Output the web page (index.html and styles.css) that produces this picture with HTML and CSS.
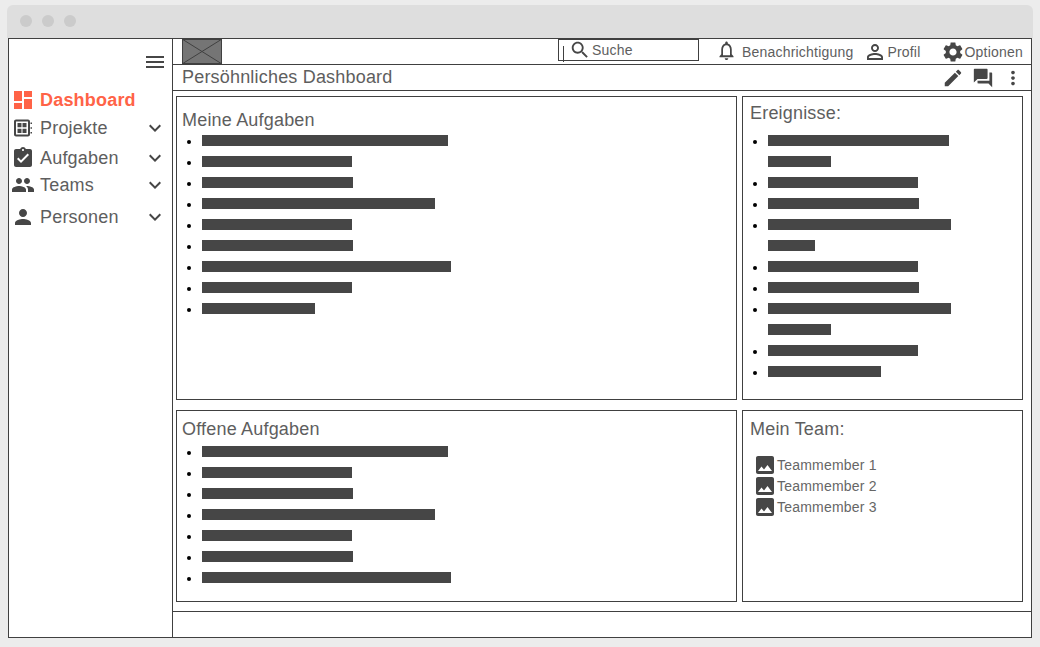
FILE: index.html
```html
<!DOCTYPE html>
<html lang="de">
<head>
<meta charset="utf-8">
<title>Dashboard</title>
<link rel="stylesheet" href="styles.css">
</head>
<body>
<div class="chrome"><i class="dot"></i><i class="dot"></i><i class="dot"></i></div>
<div class="window">
  <aside class="sidebar">
    <div class="menu-row"><svg class="ic" viewBox="0 0 24 24"><path d="M3 18h18v-2H3v2zm0-5h18v-2H3v2zm0-7v2h18V6H3z"/></svg></div>
    <nav class="nav">
      <a class="nav-item active h28"><svg class="ic" viewBox="0 0 24 24"><path d="M3 13h8V3H3v10zm0 8h8v-6H3v6zm10 0h8V11h-8v10zm0-18v6h8V3h-8z"/></svg><span class="label">Dashboard</span></a>
      <a class="nav-item h28"><svg class="ic" viewBox="0 0 24 24"><path fill-rule="evenodd" d="M5 3.500h12c1.100 0 2 .9 2 2v13c0 1.100-.9 2-2 2H5c-1.100 0-2-.9-2-2v-13c0-1.100.9-2 2-2zm0 2v13h12v-13H5zM6.500 7h4v4.300h-4V7zm5 0h4v4.300h-4V7zm-5 5.700h4V17h-4v-4.300zm5 0h4V17h-4v-4.300zM19.500 6.500H21V8h-1.500V6.500zm0 4.700H21v1.500h-1.500v-1.500zm0 4.800H21v1.500h-1.500V16z"/></svg><span class="label">Projekte</span><svg class="ic chev" viewBox="0 0 24 24"><path d="M7.410 8.590L12 13.170l4.590-4.580L18 10l-6 6-6-6 1.410-1.410z"/></svg></a>
      <a class="nav-item h32"><svg class="ic" viewBox="0 0 24 24"><path d="M19 3h-4.180C14.400 1.840 13.300 1 12 1c-1.300 0-2.400.84-2.820 2H5c-1.100 0-2 .9-2 2v14c0 1.100.9 2 2 2h14c1.100 0 2-.9 2-2V5c0-1.100-.9-2-2-2zm-7 0c.55 0 1 .45 1 1s-.45 1-1 1-1-.45-1-1 .45-1 1-1zm-2 14l-4-4 1.410-1.410L10 14.170l6.590-6.590L18 9l-8 8z"/></svg><span class="label">Aufgaben</span><svg class="ic chev" viewBox="0 0 24 24"><path d="M7.410 8.590L12 13.170l4.590-4.580L18 10l-6 6-6-6 1.410-1.410z"/></svg></a>
      <a class="nav-item h22"><svg class="ic" viewBox="0 0 24 24"><path d="M16 11c1.660 0 2.990-1.340 2.990-3S17.660 5 16 5c-1.660 0-3 1.340-3 3s1.340 3 3 3zm-8 0c1.660 0 2.990-1.340 2.990-3S9.660 5 8 5C6.340 5 5 6.340 5 8s1.340 3 3 3zm0 2c-2.330 0-7 1.170-7 3.500V19h14v-2.500c0-2.330-4.670-3.500-7-3.500zm8 0c-.29 0-.62.02-.97.05 1.160.84 1.970 1.970 1.970 3.450V19h6v-2.500c0-2.330-4.670-3.500-7-3.500z"/></svg><span class="label">Teams</span><svg class="ic chev" viewBox="0 0 24 24"><path d="M7.410 8.590L12 13.170l4.590-4.580L18 10l-6 6-6-6 1.410-1.410z"/></svg></a>
      <a class="nav-item h42"><svg class="ic" viewBox="0 0 24 24"><path d="M12 12c2.210 0 4-1.790 4-4s-1.790-4-4-4-4 1.790-4 4 1.790 4 4 4zm0 2c-2.670 0-8 1.340-8 4v2h16v-2c0-2.660-5.330-4-8-4z"/></svg><span class="label">Personen</span><svg class="ic chev" viewBox="0 0 24 24"><path d="M7.410 8.590L12 13.170l4.590-4.580L18 10l-6 6-6-6 1.410-1.410z"/></svg></a>
    </nav>
  </aside>
  <main class="main">
    <header class="topbar">
      <svg class="logo" viewBox="0 0 40 25" preserveAspectRatio="none"><rect x="0.500" y="0.500" width="39" height="24" fill="#757575" stroke="#404040"/><path d="M0 0L40 25M40 0L0 25" stroke="#404040" fill="none"/></svg>
      <div class="search">
        <i class="caret"></i>
        <svg class="ic" viewBox="0 0 24 24"><path d="M15.500 14h-.79l-.28-.27C15.410 12.590 16 11.110 16 9.500 16 5.910 13.090 3 9.500 3S3 5.910 3 9.500 5.910 16 9.500 16c1.610 0 3.090-.59 4.230-1.570l.27.28v.79l5 4.990L20.490 19l-4.990-5zm-6 0C7.010 14 5 11.990 5 9.500S7.010 5 9.500 5 14 7.010 14 9.500 11.990 14 9.500 14z"/></svg>
        <span>Suche</span>
      </div>
      <a class="tool tool-bell"><svg class="ic" viewBox="0 0 24 24" preserveAspectRatio="none"><path d="M12 22c1.100 0 2-.9 2-2h-4c0 1.100.9 2 2 2zm6-6v-5c0-3.070-1.630-5.640-4.500-6.320V4c0-.83-.67-1.500-1.500-1.500s-1.500.67-1.500 1.500v.68C7.640 5.360 6 7.920 6 11v5l-2 2v1h16v-1l-2-2zm-2 1H8v-6c0-2.480 1.510-4.500 4-4.500s4 2.020 4 4.500v6z"/></svg><span class="tool-label">Benachrichtigung</span></a>
      <a class="tool tool-profile"><svg class="ic" viewBox="0 0 24 24"><path d="M12 5.900c1.160 0 2.100.94 2.100 2.100s-.94 2.100-2.100 2.100S9.900 9.160 9.900 8s.94-2.100 2.100-2.100m0 9c2.970 0 6.100 1.460 6.100 2.100v1.100H5.900V17c0-.64 3.130-2.100 6.100-2.100M12 4C9.790 4 8 5.790 8 8s1.790 4 4 4 4-1.790 4-4-1.790-4-4-4zm0 9c-2.670 0-8 1.340-8 4v3h16v-3c0-2.660-5.330-4-8-4z"/></svg><span>Profil</span></a>
      <a class="tool tool-options"><svg class="ic" viewBox="0 0 24 24"><path d="M19.140 12.940c.04-.3.06-.61.06-.94 0-.32-.02-.64-.07-.94l2.030-1.580c.18-.14.23-.41.12-.61l-1.920-3.320c-.12-.22-.37-.29-.59-.22l-2.390.96c-.5-.38-1.030-.7-1.620-.94l-.36-2.540c-.04-.24-.24-.41-.48-.41h-3.840c-.24 0-.43.17-.47.41l-.36 2.540c-.59.24-1.130.57-1.620.94l-2.390-.96c-.22-.08-.47 0-.59.22L2.740 8.870c-.12.21-.08.47.12.61l2.030 1.580c-.05.3-.09.63-.09.94s.02.64.07.94l-2.030 1.580c-.18.14-.23.41-.12.61l1.920 3.320c.12.22.37.29.59.22l2.390-.96c.5.38 1.030.7 1.620.94l.36 2.540c.05.24.24.41.48.41h3.840c.24 0 .44-.17.47-.41l.36-2.540c.59-.24 1.130-.56 1.620-.94l2.390.96c.22.08.47 0 .59-.22l1.920-3.320c.12-.22.07-.47-.12-.61l-2.010-1.580zM12 15.600c-1.980 0-3.600-1.620-3.600-3.600s1.620-3.600 3.600-3.600 3.600 1.620 3.600 3.600-1.620 3.600-3.600 3.600z"/></svg><span>Optionen</span></a>
    </header>
    <div class="titlebar">
      <h1 class="title">Persöhnliches Dashboard</h1>
      <div class="actions">
        <svg class="ic" viewBox="0 0 24 24"><path d="M3 17.250V21h3.750L17.810 9.940l-3.750-3.750L3 17.250zM20.710 7.040c.39-.39.39-1.020 0-1.410l-2.340-2.340c-.39-.39-1.020-.39-1.410 0l-1.830 1.830 3.750 3.750 1.830-1.830z"/></svg>
        <svg class="ic" viewBox="0 0 24 24"><path d="M21 6h-2v9H6v2c0 .55.45 1 1 1h11l4 4V7c0-.55-.45-1-1-1zm-4 6V3c0-.55-.45-1-1-1H3c-.55 0-1 .45-1 1v14l4-4h10c.55 0 1-.45 1-1z"/></svg>
        <svg class="ic" viewBox="0 0 24 24"><path d="M12 8c1.100 0 2-.9 2-2s-.9-2-2-2-2 .9-2 2 .9 2 2 2zm0 2c-1.100 0-2 .9-2 2s.9 2 2 2 2-.9 2-2-.9-2-2-2zm0 6c-1.100 0-2 .9-2 2s.9 2 2 2 2-.9 2-2-.9-2-2-2z"/></svg>
      </div>
    </div>
    <div class="content">
      <section class="panel">
        <h2 class="heading head-tasks">Meine Aufgaben</h2>
        <ul class="bars">
          <li><span class="bar" style="width:246px"></span></li>
          <li><span class="bar" style="width:150px"></span></li>
          <li><span class="bar" style="width:151px"></span></li>
          <li><span class="bar" style="width:233px"></span></li>
          <li><span class="bar" style="width:150px"></span></li>
          <li><span class="bar" style="width:151px"></span></li>
          <li><span class="bar" style="width:249px"></span></li>
          <li><span class="bar" style="width:150px"></span></li>
          <li><span class="bar" style="width:113px"></span></li>
        </ul>
      </section>
      <section class="panel">
        <h2 class="heading head-side">Ereignisse:</h2>
        <ul class="bars">
          <li><span class="bar" style="width:181px"></span><br><span class="bar" style="width:63px"></span></li>
          <li><span class="bar" style="width:150px"></span></li>
          <li><span class="bar" style="width:151px"></span></li>
          <li><span class="bar" style="width:183px"></span><br><span class="bar" style="width:47px"></span></li>
          <li><span class="bar" style="width:150px"></span></li>
          <li><span class="bar" style="width:151px"></span></li>
          <li><span class="bar" style="width:183px"></span><br><span class="bar" style="width:63px"></span></li>
          <li><span class="bar" style="width:150px"></span></li>
          <li><span class="bar" style="width:113px"></span></li>
        </ul>
      </section>
      <section class="panel">
        <h2 class="heading head-open">Offene Aufgaben</h2>
        <ul class="bars">
          <li><span class="bar" style="width:246px"></span></li>
          <li><span class="bar" style="width:150px"></span></li>
          <li><span class="bar" style="width:151px"></span></li>
          <li><span class="bar" style="width:233px"></span></li>
          <li><span class="bar" style="width:150px"></span></li>
          <li><span class="bar" style="width:151px"></span></li>
          <li><span class="bar" style="width:249px"></span></li>
        </ul>
      </section>
      <section class="panel">
        <h2 class="heading head-team">Mein Team:</h2>
        <ul class="team">
          <li><svg class="ic" viewBox="0 0 24 24"><path d="M21 19V5c0-1.100-.9-2-2-2H5c-1.100 0-2 .9-2 2v14c0 1.100.9 2 2 2h14c1.100 0 2-.9 2-2zM8.500 13.500l2.500 3.010L14.500 12l4.500 6H5l3.500-4.500z"/></svg>Teammember 1</li>
          <li><svg class="ic" viewBox="0 0 24 24"><path d="M21 19V5c0-1.100-.9-2-2-2H5c-1.100 0-2 .9-2 2v14c0 1.100.9 2 2 2h14c1.100 0 2-.9 2-2zM8.500 13.500l2.500 3.010L14.500 12l4.500 6H5l3.500-4.500z"/></svg>Teammember 2</li>
          <li><svg class="ic" viewBox="0 0 24 24"><path d="M21 19V5c0-1.100-.9-2-2-2H5c-1.100 0-2 .9-2 2v14c0 1.100.9 2 2 2h14c1.100 0 2-.9 2-2zM8.500 13.500l2.500 3.010L14.500 12l4.500 6H5l3.500-4.500z"/></svg>Teammember 3</li>
        </ul>
      </section>
    </div>
    <footer class="footer"></footer>
  </main>
</div>
</body>
</html>
```
FILE: styles.css
```css
* { box-sizing: border-box; }
html, body { height: 100%; }
body {
  margin: 0;
  padding-top: 5px;
  background: #ececec;
  font-family: "Liberation Sans", Arial, sans-serif;
  color: #5e5e5e;
  overflow: hidden;
}
.chrome {
  display: flex;
  align-items: center;
  gap: 10px;
  width: 1026px;
  height: 33px;
  margin-left: 7px;
  padding: 0 0 2px 13px;
  background: #dedede;
  border-radius: 6px 6px 0 0;
}
.dot {
  width: 12px;
  height: 12px;
  border-radius: 50%;
  background: #cbcbcb;
}
.window {
  display: flex;
  width: 1024px;
  height: 600px;
  margin-left: 8px;
  background: #fff;
  border: 1px solid #404040;
}
.ic { display: block; flex: none; width: 24px; height: 24px; fill: #464646; }

.sidebar {
  flex: none;
  width: 164px;
  border-right: 1px solid #404040;
}
.menu-row {
  display: flex;
  align-items: center;
  justify-content: flex-end;
  height: 46px;
  padding-right: 5px;
}
.nav { display: flex; flex-direction: column; padding-top: 1px; }
.nav-item {
  display: flex;
  align-items: center;
  padding: 0 5px 0 2px;
  font-size: 18px;
}
.h22 { height: 22px; }
.h28 { height: 28px; }
.h32 { height: 32px; }
.h42 { height: 42px; }
.label { flex: 1; margin-left: 5px; letter-spacing: .2px; }
.nav-item.active { color: #ff6347; font-weight: 700; }
.nav-item.active .ic { fill: #ff6347; }
.nav-item .chev { margin-top: -1px; }

.main { flex: 1; display: flex; flex-direction: column; min-width: 0; }
.topbar {
  display: flex;
  align-items: flex-start;
  height: 26px;
  padding: 0 8px 0 9px;
  border-bottom: 1px solid #404040;
  font-size: 14px;
}
.logo { display: block; flex: none; width: 40px; height: 25px; }
.search {
  position: relative;
  flex: none;
  display: flex;
  align-items: center;
  width: 141px;
  height: 22px;
  margin-left: 336px;
  padding-left: 10px;
  border: 1px solid #404040;
  font-size: 14px;
  letter-spacing: .2px;
}
.search .ic { width: 22px; height: 22px; margin-right: 1px; }
.caret {
  position: absolute;
  left: 4px;
  top: 6px;
  width: 1px;
  height: 16px;
  background: #404040;
}
.tool { flex: none; display: flex; align-items: center; height: 25px; letter-spacing: .2px; }
.tool-bell { margin-left: 17px; }
.tool-bell .ic { width: 21px; height: 23px; margin-top: -3px; }
.tool-label { margin-left: 5px; }
.tool-profile { margin-left: 10px; }
.tool-options { margin-left: 20px; }

.titlebar {
  display: flex;
  align-items: center;
  justify-content: space-between;
  height: 26px;
  padding: 0 7px 0 9px;
  border-bottom: 1px solid #404040;
}
.title { margin: 0; font-size: 18px; font-weight: 400; letter-spacing: .19px; }
.actions { display: flex; gap: 8px; }
.actions .ic { width: 22px; height: 22px; }

.content {
  flex: 1;
  display: grid;
  grid-template-columns: 561px 281px;
  grid-template-rows: 304px 192px;
  gap: 10px 5px;
  padding: 5px 0 0 3px;
}
.panel { border: 1px solid #404040; min-width: 0; }
.heading { margin: 0 0 0 5px; font-size: 18px; font-weight: 400; line-height: 22px; letter-spacing: .19px; }
.head-tasks { padding-top: 12px; }
.head-side { margin-left: 7px; padding-top: 5px; }
.head-open { padding-top: 7px; }
.head-team { margin-left: 7px; padding-top: 7px; }

.bars { margin: 0; padding: 0 0 0 25px; }
.head-side + .bars { margin-top: 6px; }
.head-tasks + .bars { margin-top: -1px; }
.head-open + .bars { margin-top: 1px; }
.bars li { font-size: 16px; line-height: 21px; color: #000; }
.bars li::marker { font-size: 13px; }
.bar {
  display: inline-block;
  height: 11px;
  vertical-align: 0;
  background: #464646;
}

.team { margin: 14px 0 0; padding: 0 0 0 10px; list-style: none; font-size: 14px; letter-spacing: .2px; color: #666; }
.team li { display: flex; align-items: center; height: 21px; }

.footer { height: 26px; border-top: 1px solid #404040; }
```
